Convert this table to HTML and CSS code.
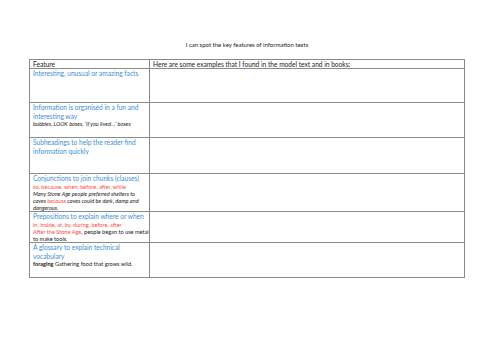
FILE: index.html
```html
<!DOCTYPE html>
<html>
<head>
<meta charset="utf-8">
<link rel="stylesheet" href="styles.css">
</head>
<body>
<div class="page">
  <p class="title">I can spot the key features of information texts</p>
  <table class="grid">
    <colgroup><col class="c1"><col class="c2"></colgroup>
    <tr class="head"><td>Feature</td><td>Here are some examples that I found in the model text and in books:</td></tr>
    <tr class="r1"><td><div class="h">Interesting, unusual or amazing facts</div></td><td></td></tr>
    <tr class="r2"><td><div class="h">Information is organised in a fun and<br>interesting way</div><div class="ex"><i>bubbles, LOOK boxes, ‘If you lived…’ boxes</i></div></td><td></td></tr>
    <tr class="r3"><td><div class="h">Subheadings to help the reader find<br>information quickly</div></td><td></td></tr>
    <tr class="r4"><td><div class="h">Conjunctions to join chunks (clauses)</div><div class="ex red">so, because, when, before, after, while</div><div class="ex"><i>Many Stone Age people preferred shelters to<br>caves <span class="red">because</span> caves could be dark, damp and<br>dangerous.</i></div></td><td></td></tr>
    <tr class="r5"><td><div class="h">Prepositions to explain where or when</div><div class="ex red">in, inside, at, by, during, before, after</div><div class="ex"><span class="red">After the Stone Age</span>, people began to use metal<br>to make tools.</div></td><td></td></tr>
    <tr class="r6"><td><div class="h">A glossary to explain technical<br>vocabulary</div><div class="ex"><b>foraging</b> Gathering food that grows wild.</div></td><td></td></tr>
  </table>
</div>
</body>
</html>
```
FILE: styles.css
```css
html, body { margin: 0; padding: 0; background: #fff; }
body { font-family: Lato, "Open Sans", sans-serif; color: #222; }
.page { padding: 41px 0 0 29px; width: 436px; }
.title { margin: 0 0 11px 0; text-align: center; font-size: 6px; line-height: 7px; width: 436px; }
.grid { border-collapse: collapse; width: 436px; table-layout: fixed; }
.c1 { width: 120px; }
.grid td { border: 1px solid #8a8a8a; vertical-align: top; padding: 0 1px 0 3px; }
.head td { font-size: 6.6px; line-height: 8px; height: 7px; }
.h { color: #3b8fd9; font-size: 6.6px; line-height: 8.5px; white-space: nowrap; }
.ex { font-size: 5.6px; line-height: 7.1px; color: #222; white-space: nowrap; }
.red { color: #ff4b4b; }
.r1 td { height: 33px; }
.r2 td { height: 34px; }
.r3 td { height: 35px; }
.r4 td { height: 37px; }
.r5 td { height: 30px; }
.r6 td { height: 34px; }
```
